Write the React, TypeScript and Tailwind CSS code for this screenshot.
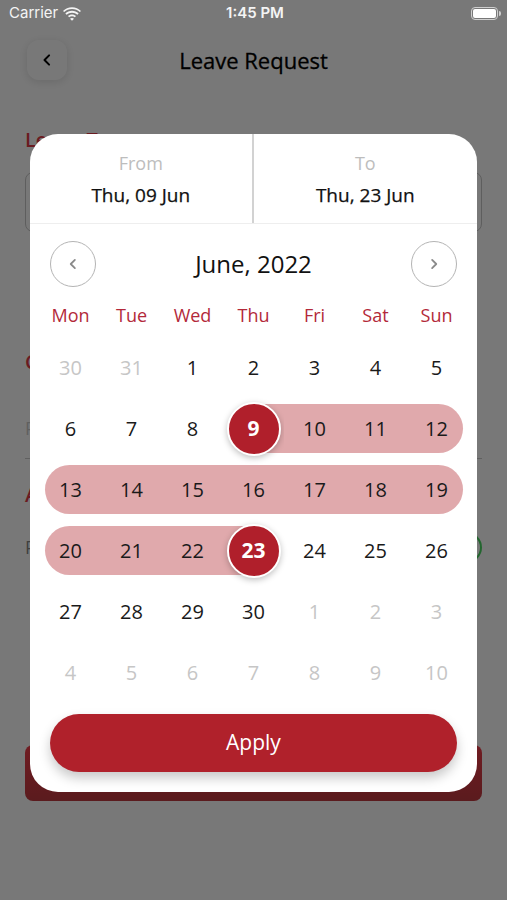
import clsx from "clsx"

type Cell = { d: number; muted?: boolean; band?: "mid" | "start" | "end"; sel?: boolean }

const weeks: Cell[][] = [
  [{ d: 30, muted: true }, { d: 31, muted: true }, { d: 1 }, { d: 2 }, { d: 3 }, { d: 4 }, { d: 5 }],
  [{ d: 6 }, { d: 7 }, { d: 8 }, { d: 9, band: "start", sel: true }, { d: 10, band: "mid" }, { d: 11, band: "mid" }, { d: 12, band: "mid" }],
  [13, 14, 15, 16, 17, 18, 19].map((d) => ({ d, band: "mid" as const })),
  [{ d: 20, band: "mid" }, { d: 21, band: "mid" }, { d: 22, band: "mid" }, { d: 23, band: "end", sel: true }, { d: 24 }, { d: 25 }, { d: 26 }],
  [{ d: 27 }, { d: 28 }, { d: 29 }, { d: 30 }, { d: 1, muted: true }, { d: 2, muted: true }, { d: 3, muted: true }],
  [4, 5, 6, 7, 8, 9, 10].map((d) => ({ d, muted: true })),
]

const days = ["Mon", "Tue", "Wed", "Thu", "Fri", "Sat", "Sun"]

function DayCell({ cell, col }: { cell: Cell; col: number }) {
  const first = col === 0
  const last = col === 6
  return (
    <div className="flex h-[61px] items-center justify-center">
      <div
        className={clsx(
          "flex h-[49px] w-full items-center justify-center",
          cell.band === "mid" && "bg-[#e0a9ac]",
          cell.band === "start" && "bg-[linear-gradient(to_right,transparent_50%,#e0a9ac_50%)]",
          cell.band === "end" && "bg-[linear-gradient(to_right,#e0a9ac_50%,transparent_50%)]",
          cell.band && first && "ml-[5px] rounded-l-full",
          cell.band && last && "mr-[4px] rounded-r-full"
        )}
      >
        {cell.sel ? (
          <div className="flex h-[54px] w-[54px] items-center justify-center rounded-full border-2 border-white bg-[#b01f2b] shadow-[0_2px_6px_rgba(0,0,0,0.25)]">
            <span className="text-[21px] font-bold text-white">{cell.d}</span>
          </div>
        ) : (
          <span
            className={clsx(
              "text-[20px]",
              cell.muted ? "text-[#c6c6c6]" : "text-[#1a1a1a]",
              cell.band && first && "-ml-[5px]",
              cell.band && last && "-mr-[4px]"
            )}
          >
            {cell.d}
          </span>
        )}
      </div>
    </div>
  )
}

function Chevron({ dir, className }: { dir: "left" | "right"; className?: string }) {
  return (
    <svg viewBox="0 0 24 24" className={className} fill="none" stroke="currentColor" strokeWidth={2.4} strokeLinecap="round" strokeLinejoin="round">
      {dir === "left" ? <path d="M14.5 6.5 9 12l5.5 5.5" /> : <path d="M9.5 6.5 15 12l-5.5 5.5" />}
    </svg>
  )
}

export default function App() {
  return (
    <div className="relative h-[900px] w-[507px] overflow-hidden bg-white font-['Open_Sans',sans-serif]">
      {/* Page behind the picker */}
      <div className="flex h-full flex-col">
        <div className="h-[27px]" />
        <div className="mt-[13px] grid h-[40px] grid-cols-[40px_1fr_40px] items-center px-[27px]">
          <div className="flex h-[40px] w-[40px] items-center justify-center rounded-xl bg-white shadow-[0_2px_10px_rgba(0,0,0,0.12)]">
            <Chevron dir="left" className="h-[20px] w-[20px] text-black" />
          </div>
          <h1 className="text-center text-[22px] font-medium text-black [-webkit-text-stroke:0.3px_black]">Leave Request</h1>
          <div />
        </div>

        <div className="flex flex-col px-[25px]">
          <p className="mt-[46px] text-[20px] font-semibold leading-[28px] text-[#e23a46]">Leave Type</p>
          <div className="mt-[18px] h-[60px] rounded-lg border border-[#c8c8c8]" />

          <p className="mt-[116px] text-[20px] font-semibold leading-[28px] text-[#e23a46]">Contact Details</p>
          <p className="mt-[40px] text-[18px] leading-[24px] text-[#cccccc]">Phone number</p>
          <div className="mt-[18px] border-b border-[#cccccc]" />

          <p className="mt-[22px] text-[20px] font-semibold leading-[28px] text-[#e23a46]">Attachment</p>
          <div className="mt-[23px] flex h-[31px] items-center justify-between">
            <span className="text-[18px] text-[#888888]">Plan ahead</span>
            <div className="flex h-[31px] w-[51px] items-center justify-end rounded-full bg-[#4cd964] px-[2px]">
              <div className="h-[27px] w-[27px] rounded-full bg-white" />
            </div>
          </div>

          <div className="mt-[182px] h-[56px] rounded-lg bg-[linear-gradient(to_bottom,#ee3c48,#c03a40)]" />
        </div>
      </div>

      {/* Dim layer */}
      <div className="absolute inset-0 bg-black/[0.53]" />

      {/* Status bar */}
      <div className="absolute inset-x-0 top-0 flex h-[27px] items-center justify-between pl-[9px] pr-[6px] font-['Inter',sans-serif] text-[15px] text-[#f4f4f4]">
        <div className="flex w-[120px] items-center gap-[5px]">
          <span>Carrier</span>
          <svg viewBox="0 0 20 15" className="h-[14px] w-[18px]" fill="currentColor">
            <path d="M10 2C6.6 2 3.6 3.3 1.3 5.4L0 4.1C2.6 1.6 6.1 0 10 0s7.4 1.6 10 4.1l-1.3 1.3C16.4 3.3 13.4 2 10 2z" />
            <path d="M10 6c-2.3 0-4.4.9-6 2.4L2.6 7C4.6 5.2 7.2 4 10 4s5.4 1.2 7.4 3L16 8.4C14.4 6.9 12.3 6 10 6z" />
            <path d="M10 10c-1.2 0-2.3.5-3.1 1.2L5.5 9.8C6.7 8.7 8.3 8 10 8s3.3.7 4.5 1.8l-1.4 1.4C12.3 10.5 11.2 10 10 10z" />
            <path d="M10 15l-2.2-2.2C8.4 12.3 9.2 12 10 12s1.6.3 2.2.8z" />
          </svg>
        </div>
        <span className="font-semibold">1:45 PM</span>
        <div className="flex w-[120px] items-center justify-end">
          <div className="flex h-[13px] w-[27px] items-center rounded-[4px] border border-[#cfcfcf] p-[1px]">
            <div className="h-full w-full rounded-[2px] bg-white" />
          </div>
          <div className="ml-[1px] h-[5px] w-[2px] rounded-r-sm bg-[#cfcfcf]" />
        </div>
      </div>

      {/* Date range picker */}
      <div className="absolute left-[30px] top-[134px] w-[447px] overflow-hidden rounded-[28px] bg-white">
        <div className="grid h-[90px] grid-cols-2 border-b border-[#eeeeee]">
          <div className="flex flex-col items-center border-r-2 border-[#d2d2d2] pt-[17px]">
            <span className="text-[18px] leading-[24px] text-[#bdbdbd]">From</span>
            <span className="mt-[8px] text-[19px] font-medium leading-[24px] text-[#111111] [-webkit-text-stroke:0.25px_#111]">Thu, 09 Jun</span>
          </div>
          <div className="flex flex-col items-center pt-[17px]">
            <span className="text-[18px] leading-[24px] text-[#bdbdbd]">To</span>
            <span className="mt-[8px] text-[19px] font-medium leading-[24px] text-[#111111] [-webkit-text-stroke:0.25px_#111]">Thu, 23 Jun</span>
          </div>
        </div>

        <div className="mt-[17px] flex items-center justify-between px-[20px]">
          <button className="flex h-[46px] w-[46px] items-center justify-center rounded-full border-[1.5px] border-[#b4b4b4] text-[#8a8a8a]">
            <Chevron dir="left" className="h-[18px] w-[18px]" />
          </button>
          <span className="text-[24px] text-[#111111]">June, 2022</span>
          <button className="flex h-[46px] w-[46px] items-center justify-center rounded-full border-[1.5px] border-[#b4b4b4] text-[#8a8a8a]">
            <Chevron dir="right" className="h-[18px] w-[18px]" />
          </button>
        </div>

        <div className="px-[10px]">
          <div className="mt-[16px] grid grid-cols-7">
            {days.map((d) => (
              <span key={d} className="text-center text-[18px] leading-[24px] text-[#b3293a]">
                {d}
              </span>
            ))}
          </div>
          <div className="mt-[10px] flex flex-col">
            {weeks.map((w, i) => (
              <div key={i} className="grid grid-cols-7">
                {w.map((c, j) => (
                  <DayCell key={j} cell={c} col={j} />
                ))}
              </div>
            ))}
          </div>
        </div>

        <div className="px-[20px] pb-[20px] pt-[11px]">
          <button className="flex h-[58px] w-full items-center justify-center rounded-full bg-[#b0212b] text-[21px] text-white shadow-[0_6px_12px_rgba(0,0,0,0.22)]">
            Apply
          </button>
        </div>
      </div>
    </div>
  )
}
